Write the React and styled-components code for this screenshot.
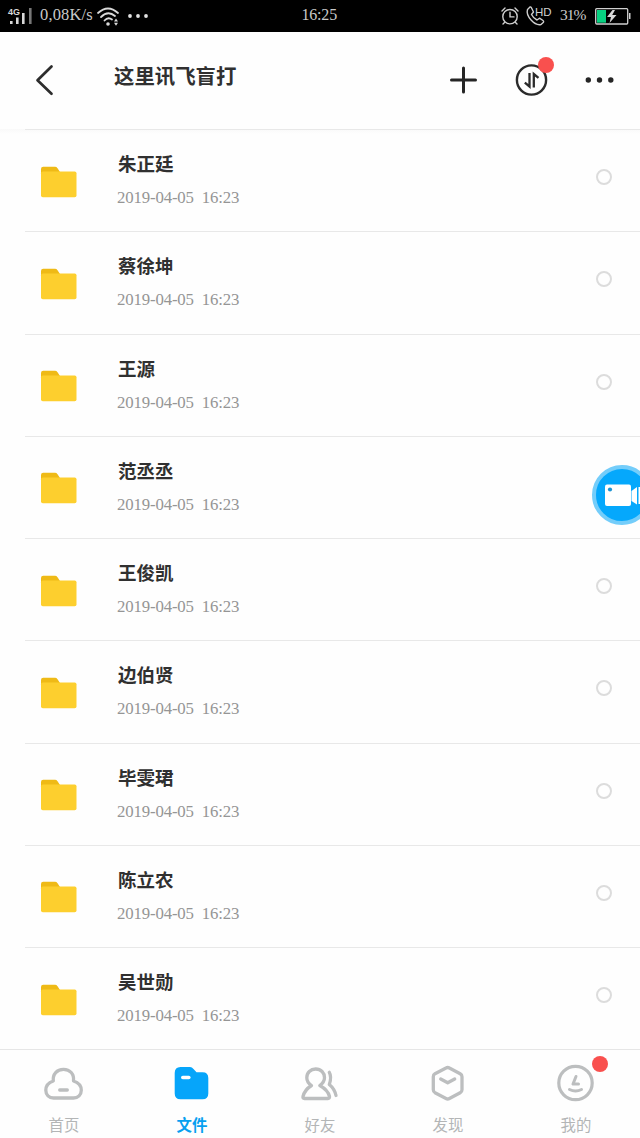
import React from 'react';
import styled, { createGlobalStyle } from "styled-components";

const GlobalStyle = createGlobalStyle`
  * {
    box-sizing: border-box;
  }

  body {
    margin: 0;
    background: #fefefe;
    font-family: "Noto Sans CJK SC", sans-serif;
  }

  svg {
    display: block;
    flex: none;
    overflow: visible;
  }
`;

const Screen = styled.div`
  position: relative;
  display: flex;
  flex-direction: column;
  width: 640px;
  height: 1138px;
  overflow: hidden;
  background: #fefefe;
`;

const StatusBar = styled.div`
  display: grid;
  grid-template-columns: 1fr auto 1fr;
  align-items: center;
  height: 32px;
  flex: none;
  padding: 0 9px 0 8px;
  background: #000;
  color: #c9c9c9;
`;

const StatusGroup = styled.div`
  display: flex;
  align-items: center;
  justify-content: ${(props) => (props.$end ? "flex-end" : "flex-start")};
`;

const StatusText = styled.span`
  width: ${(props) => props.$width}px;
  margin-left: ${(props) => props.$left || 0}px;
  margin-right: ${(props) => props.$right || 0}px;
  font-family: "Liberation Serif", serif;
  font-size: ${(props) => props.$size || 17}px;
  line-height: 30px;
  height: 32px;
  letter-spacing: ${(props) => props.$spacing || 0}px;
  white-space: nowrap;
`;

const Header = styled.header`
  display: flex;
  align-items: center;
  height: 97px;
  flex: none;
  padding: 0 26px 1px 35px;
  background: #fefefe;
`;

const Title = styled.h1`
  flex: 1;
  margin: 0 0 10px 60px;
  font-size: 20.4px;
  line-height: 30px;
  font-weight: 700;
  color: #303030;
`;

const Actions = styled.div`
  display: flex;
  align-items: center;
  gap: 38px;
`;

const BadgeHolder = styled.div`
  position: relative;
`;

const Badge = styled.i`
  position: absolute;
  top: ${(props) => props.$top}px;
  right: ${(props) => props.$right}px;
  width: 16px;
  height: 16px;
  border-radius: 50%;
  background: #f9504e;
`;

const FileList = styled.ul`
  flex: none;
  height: 920px;
  margin: 0;
  padding: 0 0 0 25px;
  list-style: none;
  display: grid;
  grid-template-rows: repeat(9, 102.25px);
  background: linear-gradient(#f9f9f9, #fefefe 5px);
`;

const FileRow = styled.li`
  display: flex;
  align-items: center;
  padding: 0 28px 0 15px;
  border-top: 1px solid #e8e8e8;
`;

const FileInfo = styled.div`
  flex: 1;
  margin-left: 40px;
  height: 100%;
  padding-top: 19px;
`;

const FileName = styled.div`
  padding-left: 1px;
  font-size: 18.5px;
  line-height: 28px;
  font-weight: 700;
  color: #303030;
`;

const FileDate = styled.div`
  margin-top: 9px;
  font-family: "Liberation Serif", serif;
  font-size: 16.8px;
  line-height: 24px;
  letter-spacing: -0.15px;
  word-spacing: 4px;
  color: #959595;
`;

const Radio = styled.span`
  width: 16px;
  height: 16px;
  margin-bottom: 7px;
  border: 2px solid #dcdcdc;
  border-radius: 50%;
`;

const FloatingButton = styled.div`
  position: absolute;
  top: 465px;
  left: 592px;
  width: 60px;
  height: 60px;
  border: 4px solid #74cdfa;
  border-radius: 50%;
  background: #05a8fc;
`;

const TabBar = styled.nav`
  display: grid;
  grid-template-columns: repeat(5, 1fr);
  flex: 1;
  border-top: 1px solid #e6e6e6;
  background: #fefefe;
`;

const Tab = styled.div`
  display: flex;
  flex-direction: column;
  align-items: center;
  padding-top: 14px;
  color: ${(props) => (props.$active ? "#06a5fa" : "#bcbebf")};
`;

const TabLabel = styled.span`
  margin-top: 8px;
  font-size: 15.4px;
  line-height: 24px;
  font-weight: ${(props) => (props.$active ? 700 : 400)};
  color: ${(props) => (props.$active ? "#06a0f0" : "#b3b5b6")};
`;

const FILES = ["朱正廷", "蔡徐坤", "王源", "范丞丞", "王俊凯", "边伯贤", "毕雯珺", "陈立农", "吴世勋"];

const SignalIcon = () => (
    <svg width="25" height="20" viewBox="0 0 25 20" fill="#d8d8d8">
        <text x="0" y="9" fontFamily="Liberation Sans" fontSize="9" fontWeight="700">4G</text>
        <path d="M2 15h2.600v3H2zM8 11.500h2.600V18H8zM14 7h2.600v11H14z"/>
        <path d="M21 2h2.600v16H21z" fill="#777"/>
    </svg>
);

const WifiIcon = () => (
    <svg width="22" height="19" viewBox="0 0 22 19" fill="none" stroke="#d8d8d8" strokeWidth="1.8" strokeLinecap="round">
        <path d="M1 6Q11-3 21 6M4 10Q11 3 18 9M7.5 13.5Q11 9.5 15 12.5"/>
        <circle cx="11" cy="17" r="1.8" fill="#d8d8d8" stroke="none"/>
        <path d="M17 14.5l2-3 2 3zM17 15.7h4l-2 3z" fill="#d8d8d8" stroke="none"/>
    </svg>
);

const StatusDots = () => (
    <svg width="22" height="4" viewBox="0 0 22 4" fill="#e2e2e2">
        <circle cx="2" cy="2" r="1.9"/>
        <circle cx="10" cy="2" r="1.9"/>
        <circle cx="18" cy="2" r="1.9"/>
    </svg>
);

const AlarmIcon = () => (
    <svg width="18" height="18" viewBox="0 0 18 18" fill="none" stroke="#cecece" strokeWidth="1.4" strokeLinecap="round">
        <circle cx="9" cy="9.7" r="7.2"/>
        <path d="M9 5.2v4.7h4M1 4L4 1M14 1l3 3M3.5 15.5L2 17M14.5 15.5L16 17"/>
    </svg>
);

const PhoneHdIcon = () => (
    <svg width="26" height="20" viewBox="0 0 26 20" fill="none" stroke="#cecece" strokeWidth="1.4" strokeLinejoin="round">
        <path d="M4 1L1.5 3.5C-.5 10 8.5 20 15 18.5L17.5 16.2Q18 15.3 17 14.5L13.5 12.2L11 14Q7.5 12.5 5.5 8.5L7.5 6L5.3 1.5Q4.8.6 4 1z"/>
        <text x="9" y="9.500" fill="#d0d0d0" stroke="none" fontFamily="Liberation Sans" fontSize="11.500">HD</text>
    </svg>
);

const BatteryIcon = () => (
    <svg width="36" height="17" viewBox="0 0 36 17">
        <rect x=".7" y=".7" width="32" height="15.3" rx="1" fill="none" stroke="#d0d0d0" strokeWidth="1.3"/>
        <path d="M34 5h1.5v6H34z" fill="#d0d0d0"/>
        <path d="M2 2h9v12.700H2z" fill="#08d181"/>
        <path d="M17.5 2L12 9h4l-1.500 6L21.500 7h-4.300L20 2z" fill="#d8d8d8"/>
    </svg>
);

const BackIcon = () => (
    <svg width="19" height="30" viewBox="0 0 19 30" fill="none" stroke="#2d2d2d" strokeWidth="2.7" strokeLinecap="round" strokeLinejoin="round">
        <path d="M16.5 1.5L2.500 15.300L16.500 28.800"/>
    </svg>
);

const PlusIcon = () => (
    <svg width="28" height="28" viewBox="0 0 28 28" stroke="#252525" strokeWidth="3" strokeLinecap="round">
        <path d="M14.500 2v24M2.500 14h24"/>
    </svg>
);

const TransferIcon = () => (
    <svg width="32" height="32" viewBox="0 0 32 32" fill="none" stroke="#2b2b2b" strokeWidth="2.4">
        <circle cx="16.500" cy="16" r="14.600"/>
        <path d="M14.500 9v13.500L9.800 18.700M18.800 23.500V10L23.500 13.800" strokeWidth="2.300"/>
    </svg>
);

const MoreIcon = () => (
    <svg width="29" height="6" viewBox="0 0 29 6" fill="#252525">
        <circle cx="3.300" cy="3" r="2.700"/>
        <circle cx="14.500" cy="3" r="2.700"/>
        <circle cx="25.800" cy="3" r="2.700"/>
    </svg>
);

const FolderIcon = () => (
    <svg width="37" height="30" viewBox="0 0 37 30">
        <path d="M1 12V3Q1 .8 3.2.8H15Q16.500.8 17.500 2.200L20 6V12z" fill="#efba16"/>
        <rect x="1" y="5.500" width="35.500" height="25.700" rx="1.800" fill="#fdcf2e"/>
    </svg>
);

const CameraIcon = () => (
    <svg width="52" height="52" viewBox="0 0 52 52" fill="#fff">
        <rect x="9" y="15.500" width="26" height="21.500" rx="2"/>
        <path d="M35.500 22L41 18V35.500L35.500 32z"/>
        <path d="M42.500 18h1.800v17h-1.800z"/>
        <circle cx="14" cy="20.500" r="2.100" fill="#1b94d3"/>
    </svg>
);

const CloudIcon = () => (
    <svg width="40" height="40" viewBox="0 0 40 40" fill="none" stroke="currentColor" strokeWidth="3.3" strokeLinecap="round" strokeLinejoin="round">
        <path d="M9.500 34C5 34 1.800 30.800 1.800 26.300C1.800 22 4.800 18.500 9.300 17C8.500 10 13 5.300 19.500 5.300C26 5.300 30.300 10 29.500 17C34.200 18.500 37.300 22 37.300 26.300C37.300 30.800 34 34 29.500 34z"/>
        <path d="M15.700 26h7.600"/>
    </svg>
);

const FilesIcon = () => (
    <svg width="40" height="40" viewBox="0 0 40 40">
        <path d="M8.500 3H18Q20 3 21.500 5L24.500 8.300H30.500Q36.300 8.300 36.300 14V29.500Q36.300 35.300 30.500 35.300H8.500Q2.700 35.300 2.700 29.500V9Q2.700 3 8.500 3z" fill="currentColor"/>
        <path d="M10.800 13.500h6" stroke="#fff" strokeWidth="3.600" strokeLinecap="round"/>
    </svg>
);

const FriendsIcon = () => (
    <svg width="40" height="40" viewBox="0 0 40 40" fill="none" stroke="currentColor" strokeWidth="3.3" strokeLinecap="round" strokeLinejoin="round">
        <path d="M11.500 21.500C8.500 19.500 6.800 17 6.800 13.700C6.800 8.700 10.500 5 15.700 5C21 5 24.500 8.700 24.500 13.700C24.500 17 22.500 19.500 19.800 21.500C24.300 24 28.300 27.500 29.500 32.500Q29.700 34.500 28 34.500H4.500Q2.500 34.500 3 32.500C4.200 27.500 7.500 24 11.500 21.500z"/>
        <path d="M29.300 8.300C31.500 12 31 15.500 29.300 20.500C33 23.500 35 27 36 31.500"/>
    </svg>
);

const DiscoverIcon = () => (
    <svg width="40" height="40" viewBox="0 0 40 40" fill="none" stroke="currentColor" strokeWidth="3.3" strokeLinecap="round" strokeLinejoin="round">
        <path d="M18 4Q19.700 3 21.400 4L32.200 9.700Q34 10.700 34 12.700V25.700Q34 27.700 32.200 28.700L21.400 34.500Q19.700 35.500 18 34.500L7 28.700Q5.300 27.700 5.300 25.700V12.700Q5.300 10.700 7 9.700z"/>
        <path d="M12.700 15L19.700 18.800L26.700 15"/>
    </svg>
);

const MineIcon = () => (
    <svg width="40" height="40" viewBox="0 0 40 40" fill="none" stroke="currentColor" strokeWidth="3.2" strokeLinecap="round" strokeLinejoin="round">
        <circle cx="19.500" cy="19" r="16.700"/>
        <path d="M20 12.500L17 20H22.500M13.500 25.500Q19.500 28.500 25.500 25.500" strokeWidth="3"/>
    </svg>
);

const TABS = [
    { label: "首页", icon: CloudIcon },
    { label: "文件", icon: FilesIcon, active: true },
    { label: "好友", icon: FriendsIcon },
    { label: "发现", icon: DiscoverIcon },
    { label: "我的", icon: MineIcon, badge: true }
];

const App = () => {
    return (
        <Screen>
            <GlobalStyle/>
            <StatusBar>
                <StatusGroup>
                    <SignalIcon/>
                    <StatusText $width={52} $left={7} $right={5} $spacing={0.15} $size={16.5}>0,08K/s</StatusText>
                    <WifiIcon/>
                    <StatusText $width={9}/>
                    <StatusDots/>
                </StatusGroup>
                <StatusText $width={36} $size={16} $spacing={-0.2}>16:25</StatusText>
                <StatusGroup $end>
                    <AlarmIcon/>
                    <StatusText $width={7}/>
                    <PhoneHdIcon/>
                    <StatusText $width={26} $left={8} $right={9} $size={15.5} $spacing={-1}>31%</StatusText>
                    <BatteryIcon/>
                </StatusGroup>
            </StatusBar>
            <Header>
                <BackIcon/>
                <Title>这里讯飞盲打</Title>
                <Actions>
                    <PlusIcon/>
                    <BadgeHolder>
                        <TransferIcon/>
                        <Badge $top={-7} $right={-7}/>
                    </BadgeHolder>
                    <MoreIcon/>
                </Actions>
            </Header>
            <FileList>
                {FILES.map((name) => (
                    <FileRow key={name}>
                        <FolderIcon/>
                        <FileInfo>
                            <FileName>{name}</FileName>
                            <FileDate>2019-04-05 16:23</FileDate>
                        </FileInfo>
                        <Radio/>
                    </FileRow>
                ))}
            </FileList>
            <TabBar>
                {TABS.map(({ label, icon: Icon, active, badge }) => (
                    <Tab key={label} $active={active}>
                        <BadgeHolder>
                            <Icon/>
                            {badge && <Badge $top={-8} $right={-12}/>}
                        </BadgeHolder>
                        <TabLabel $active={active}>{label}</TabLabel>
                    </Tab>
                ))}
            </TabBar>
            <FloatingButton>
                <CameraIcon/>
            </FloatingButton>
        </Screen>
    );
};

export default App;
